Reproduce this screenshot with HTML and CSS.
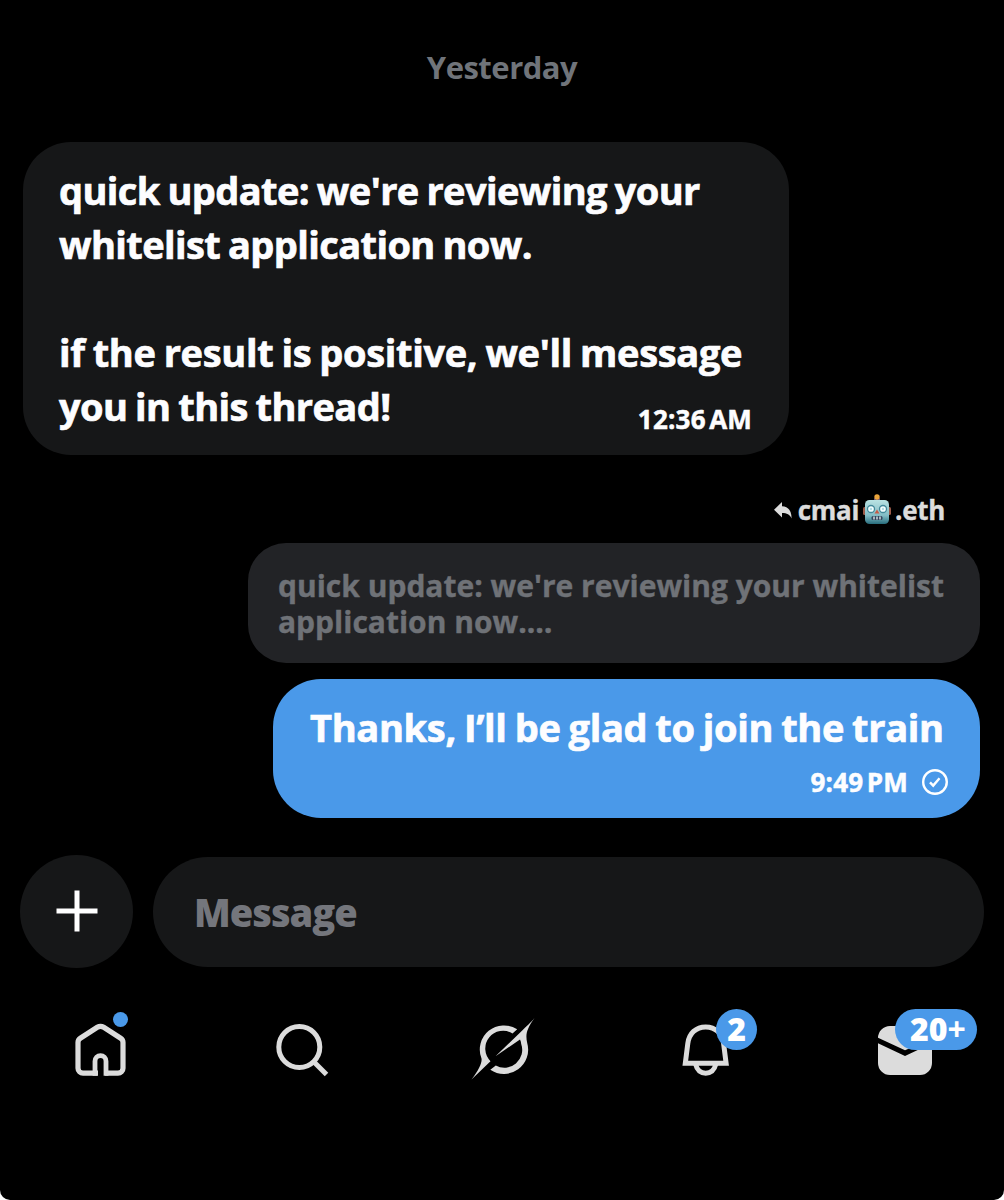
FILE: index.html
```html
<!DOCTYPE html>
<html lang="en">
<head>
  <meta charset="UTF-8">
  <meta name="viewport" content="width=device-width, initial-scale=1">
  <title>Messages</title>
  <link rel="stylesheet" href="styles.css">
</head>
<body>
  <div class="screen">
    <div class="date">Yesterday</div>

    <main class="thread">
      <div class="bubble received">
        <p class="line">quick update: we're reviewing your</p>
        <p class="line">whitelist application now.</p>
        <p class="line">&nbsp;</p>
        <p class="line looser">if the result is positive, we'll message</p>
        <div class="last-row">
          <p class="line">you in this thread!</p>
          <span class="time">12:36 AM</span>
        </div>
      </div>

      <div class="reply-to">
        <svg class="reply-icon" width="18" height="17" viewBox="0 0 18 17">
          <path d="M8 0v4.200c6 .2 9.600 4.200 9.600 12.300-1.800-3.800-4.600-5.300-9.600-5.400v4.400L0 7.800z" fill="#dcdcdc"/>
        </svg>
        <span class="name">cmai</span>
        <svg class="robot" width="28" height="32" viewBox="0 0 28 32">
          <defs>
            <linearGradient id="face" x1="0" y1="0" x2="0" y2="1">
              <stop offset="0" stop-color="#b9e3e3"/>
              <stop offset=".65" stop-color="#82bcc5"/>
              <stop offset="1" stop-color="#276c7c"/>
            </linearGradient>
          </defs>
          <rect x="0" y="13" width="4" height="8" rx="1.500" fill="#9c5a48"/>
          <rect x="24" y="13" width="4" height="8" rx="1.500" fill="#9c5a48"/>
          <rect x="11" y="4" width="6" height="4" rx="1" fill="#665078"/>
          <circle cx="14" cy="3" r="2.700" fill="#eba43b"/>
          <rect x="2" y="6" width="24" height="24" rx="4.500" fill="url(#face)"/>
          <circle cx="8" cy="15" r="3.500" fill="#f2ffff" stroke="#43899a" stroke-width="1.300"/>
          <circle cx="20" cy="15" r="3.500" fill="#f2ffff" stroke="#43899a" stroke-width="1.300"/>
          <circle cx="8" cy="15" r="1.200" fill="#b4dce4"/>
          <circle cx="20" cy="15" r="1.200" fill="#b4dce4"/>
          <path d="M14 15.500l2.500 4h-5z" fill="#c75c48"/>
          <rect x="8.500" y="22" width="11" height="4" rx="1.500" fill="#33465f"/>
          <path d="M11 22.500v3M14 22.500v3M17 22.500v3" stroke="#e9f4f4" stroke-width="1.300"/>
        </svg>
        <span class="name">.eth</span>
      </div>

      <div class="quote">quick update: we're reviewing your whitelist<br>application now.…</div>

      <div class="bubble sent">
        <p class="line looser">Thanks, I’ll be glad to join the train</p>
        <div class="meta">
          <span class="time">9:49 PM</span>
          <svg width="28" height="28" viewBox="0 0 28 28" fill="none" stroke="#fff" stroke-width="2.400">
            <circle cx="14" cy="14" r="11.800"/>
            <path d="M9 14.300l3.200 3.300 6.300-7.300"/>
          </svg>
        </div>
      </div>
    </main>

    <div class="composer">
      <button class="add" aria-label="Add">
        <svg width="42" height="42" viewBox="0 0 42 42">
          <path d="M21 .500v41M.500 21h41" stroke="#fff" stroke-width="5"/>
        </svg>
      </button>
      <div class="input"><span>Message</span></div>
    </div>

    <nav class="tabs">
      <a class="tab">
        <svg width="60" height="60" viewBox="0 0 60 60" fill="none" stroke="#dcdcdc" stroke-width="5.200">
          <path d="M27 53.200H12a5 5 0 0 1-5-5V22.500a5 5 0 0 1 2.300-4.200l17-11a6 6 0 0 1 6.400 0l17 11a5 5 0 0 1 2.300 4.200v25.700a5 5 0 0 1-5 5H34"/>
          <path d="M24 55.800V41.200a5.500 5.500 0 0 1 11 0v14.600" stroke-width="4.800"/>
        </svg>
        <span class="dot"></span>
      </a>
      <a class="tab">
        <svg width="60" height="60" viewBox="0 0 60 60" fill="none" stroke="#dcdcdc" stroke-width="5">
          <circle cx="27.300" cy="27" r="20.500"/>
          <path d="M41.500 41.500l13 13"/>
        </svg>
      </a>
      <a class="tab">
        <svg class="wide" width="64" height="60" viewBox="11.500 15 64 60" fill="#dcdcdc">
          <path d="M57.700 24.300A24.200 24.200 0 0 0 22 53.500C22.700 57 20 64 12 74.500L31 56.200A17.800 17.800 0 0 1 53 28.500z"/>
          <path d="M75 13C71 18 67 21 61.200 27L36 51.200 60.500 34.500C61.300 36 61.600 37.500 61.700 39A17.800 17.800 0 0 1 36.300 60.500L30.800 64.700A24.200 24.200 0 0 0 67.700 38C66 30 66.500 25 75 13z"/>
        </svg>
      </a>
      <a class="tab">
        <svg width="60" height="60" viewBox="-1 0 60 60" fill="none" stroke="#dcdcdc" stroke-width="5">
          <path d="M10.300 43.200l2.500-19.700C14 13.500 21 6.900 30.700 6.900S47.400 13.500 48.600 23.500l2.500 19.700z"/>
          <path d="M20.500 44c1.500 6 5.200 9.200 10.200 9.200s8.700-3.200 10.200-9.200"/>
        </svg>
        <span class="badge">2</span>
      </a>
      <a class="tab">
        <svg width="60" height="60" viewBox="0 0 60 60" fill="#dcdcdc">
          <path d="M3 18a12 12 0 0 1 12-12h30a12 12 0 0 1 12 12v1L30 30.300 3 17.800z"/>
          <path d="M3 23.300L30 36l27-12.700V43a12 12 0 0 1-12 12H15A12 12 0 0 1 3 43z"/>
        </svg>
        <span class="badge badge-wide">20<i>+</i></span>
      </a>
    </nav>
  </div>
</body>
</html>
```

FILE: styles.css
```css
* {
  box-sizing: border-box;
}

body {
  margin: 0;
  background: #fff;
  font-family: "Open Sans", "Noto Sans", sans-serif;
  font-weight: 700;
}

p {
  margin: 0;
}

.screen {
  height: 1200px;
  background: #000;
  border-radius: 0 0 10px 10px;
  overflow: hidden;
  white-space: nowrap;
}

.date {
  height: 142px;
  padding-top: 46px;
  text-align: center;
  font-size: 31px;
  letter-spacing: -0.500px;
  line-height: 42px;
  color: #70747a;
}

.thread {
  display: flex;
  flex-direction: column;
  align-items: flex-end;
  padding: 0 24px 0 23px;
}

.bubble {
  border-radius: 48px;
  color: #fdfdff;
}

.line {
  font-size: 38px;
  line-height: 54.100px;
  letter-spacing: -0.600px;
  word-spacing: -1.500px;
  -webkit-text-stroke: 0.700px;
}

.looser {
  letter-spacing: -0.330px;
}

.received {
  align-self: flex-start;
  width: 766px;
  height: 313px;
  padding: 21px 37px 0 36px;
  background: #161718;
}

.last-row {
  display: flex;
  justify-content: space-between;
}

.time {
  font-size: 26px;
  line-height: 36px;
  letter-spacing: 0.200px;
  word-spacing: -3.500px;
  -webkit-text-stroke: 0.500px;
}

.last-row .time {
  margin-top: 22px;
}

.reply-to {
  display: flex;
  align-items: center;
  height: 40px;
  margin: 35px 35px 0 0;
}

.name {
  font-size: 26px;
  letter-spacing: -0.300px;
  line-height: 36px;
  color: #dcdcdc;
  -webkit-text-stroke: 0.400px;
}

.reply-icon {
  margin-right: 6px;
}

.robot {
  margin: 0 4px;
}

.quote {
  width: 732px;
  height: 120px;
  margin-top: 13px;
  padding: 25px 30px;
  border-radius: 38px;
  background: #222326;
  color: #6f7277;
  font-size: 30px;
  line-height: 36px;
  -webkit-text-stroke: 0.400px;
}

.sent {
  width: 707px;
  height: 139px;
  margin-top: 16px;
  padding: 21px 31px 0 37px;
  background: #4a99e9;
}

.meta {
  display: flex;
  justify-content: flex-end;
  align-items: center;
  gap: 13px;
  height: 56px;
}

.composer {
  display: flex;
  align-items: center;
  gap: 20px;
  height: 113px;
  margin-top: 37px;
  padding: 0 20px;
}

.add {
  display: flex;
  align-items: center;
  justify-content: center;
  width: 113px;
  height: 113px;
  padding: 0 0 2px;
  border: none;
  border-radius: 50%;
  background: #161718;
}

.input {
  width: 831px;
  height: 110px;
  padding-left: 41px;
  border-radius: 55px;
  background: #161718;
  font-size: 38px;
  font-weight: 800;
  letter-spacing: -1px;
  line-height: 110px;
  color: #74767c;
}

.tabs {
  display: flex;
  justify-content: space-between;
  margin-top: 52px;
  padding: 0 69px 0 71px;
}

.tab {
  position: relative;
  width: 60px;
  height: 60px;
}

.wide {
  margin-left: -2px;
  overflow: visible;
}

.dot {
  position: absolute;
  left: 42px;
  top: -8px;
  width: 15px;
  height: 15px;
  border-radius: 50%;
  background: #4a99e9;
}

.badge {
  position: absolute;
  left: 42px;
  top: -11px;
  width: 41px;
  height: 41px;
  border-radius: 21px;
  background: #4a99e9;
  color: #fff;
  font-size: 32px;
  font-weight: 800;
  line-height: 40px;
  text-align: center;
}

.badge-wide {
  left: 20px;
  width: 82px;
  padding-left: 4px;
}

.badge i {
  font-style: normal;
  font-weight: 700;
}
```
